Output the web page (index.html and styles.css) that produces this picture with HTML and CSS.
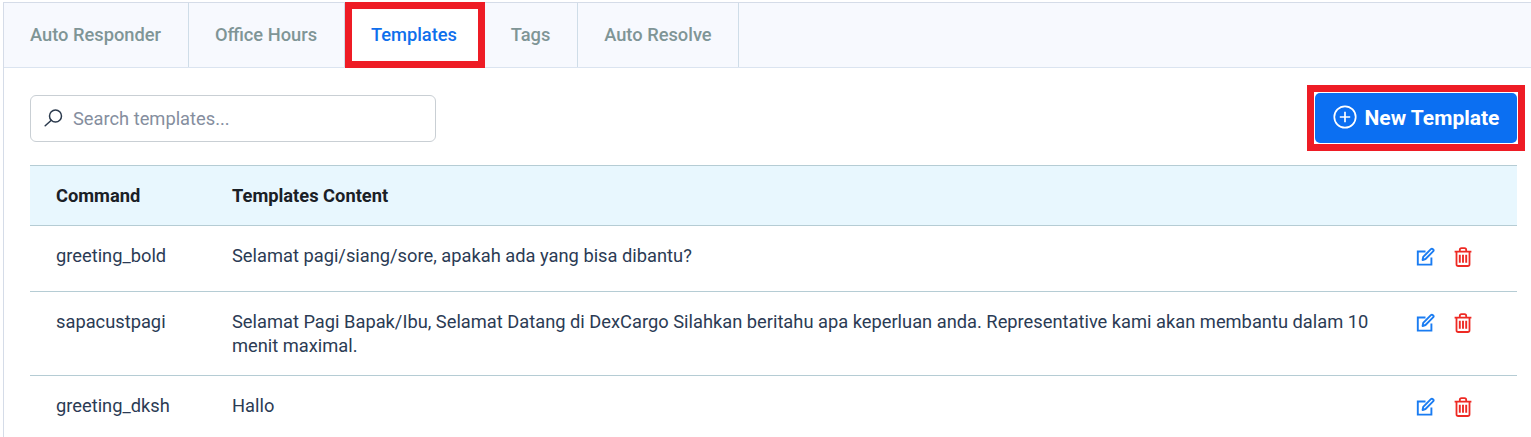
FILE: index.html
```html
<!DOCTYPE html>
<html lang="en">

<head>
    <meta charset="UTF-8">
    <meta name="viewport" content="width=device-width, initial-scale=1.0">
    <title>Templates</title>
    <link rel="stylesheet" href="styles.css">
</head>

<body>
    <!-- row icons -->
    <svg class="icon-defs" width="0" height="0">
        <symbol id="icon-edit" viewBox="0 0 20 20">
            <path d="M10.500 4.500H2.800V17.600H16.400V10.500" fill="none" stroke="#1a7cf2" stroke-width="1.900"></path>
            <path d="M7.600 13l.6-3.100L15.900 2.200c.6-.6 1.400-.6 1.900-.1l.4.4c.5.5.5 1.300-.1 1.900l-7.600 7.600z" fill="none" stroke="#1a7cf2" stroke-width="1.900" stroke-linejoin="round"></path>
        </symbol>
        <symbol id="icon-trash" viewBox="0 0 18 20">
            <path d="M.6 4.600h16.800M5.800 4.400V3c0-1 .7-1.800 1.700-1.800h3c1 0 1.700.8 1.700 1.800v1.400M2.500 4.800v12.400c0 1 .8 1.800 1.800 1.800h9.400c1 0 1.800-.8 1.800-1.800V4.800" fill="none" stroke="#ee2a24" stroke-width="1.800"></path>
            <path d="M5.800 7.800v8M9 7.800v8M12.200 7.800v8" fill="none" stroke="#ee2a24" stroke-width="1.900"></path>
        </symbol>
    </svg>

    <div class="panel">
        <div class="tabs">
            <a class="tab">Auto Responder</a>
            <a class="tab">Office Hours</a>
            <a class="tab active">Templates<span class="mark mark-tab"></span></a>
            <a class="tab">Tags</a>
            <a class="tab">Auto Resolve</a>
        </div>

        <div class="content">
            <div class="toolbar">
                <div class="search">
                    <svg class="search-icon" width="20" height="20" viewBox="0 0 20 20" fill="none" stroke="#2b3a4d" stroke-width="1.500">
                        <circle cx="11.500" cy="7" r="6"></circle>
                        <path d="M7.300 11.200 1.200 16.800" stroke-linecap="round"></path>
                    </svg>
                    <span class="search-text">Search templates...</span>
                </div>
                <button class="new-button">
                    <svg class="plus-icon" width="24" height="24" viewBox="0 0 24 24" fill="none" stroke="#fff" stroke-width="1.700">
                        <circle cx="12" cy="12" r="10.700"></circle>
                        <path d="M12 6.800v10.400M6.800 12h10.400"></path>
                    </svg>
                    New Template
                    <span class="mark mark-button"></span>
                </button>
            </div>

            <table class="templates">
                <thead>
                    <tr>
                        <th class="col-command">Command</th>
                        <th>Templates Content</th>
                        <th class="col-actions"></th>
                    </tr>
                </thead>
                <tbody>
                    <tr>
                        <td>greeting_bold</td>
                        <td>Selamat pagi/siang/sore, apakah ada yang bisa dibantu?</td>
                        <td class="actions">
                            <svg class="icon" width="20" height="20"><use href="#icon-edit"></use></svg>
                            <svg class="icon" width="18" height="20"><use href="#icon-trash"></use></svg>
                        </td>
                    </tr>
                    <tr>
                        <td>sapacustpagi</td>
                        <td>Selamat Pagi Bapak/Ibu, Selamat Datang di DexCargo Silahkan beritahu apa keperluan anda. Representative kami akan membantu dalam 10 menit maximal.</td>
                        <td class="actions">
                            <svg class="icon" width="20" height="20"><use href="#icon-edit"></use></svg>
                            <svg class="icon" width="18" height="20"><use href="#icon-trash"></use></svg>
                        </td>
                    </tr>
                    <tr>
                        <td>greeting_dksh</td>
                        <td>Hallo</td>
                        <td class="actions">
                            <svg class="icon" width="20" height="20"><use href="#icon-edit"></use></svg>
                            <svg class="icon" width="18" height="20"><use href="#icon-trash"></use></svg>
                        </td>
                    </tr>
                </tbody>
            </table>
        </div>
    </div>
</body>

</html>
```

FILE: styles.css
```css
html,
body {
    height: 100%;
}

body {
    font-family: Roboto, "Liberation Sans", sans-serif;
    background-color: #fff;
    margin: 0;
    padding: 2px 0 0 3px;
    box-sizing: border-box;
    overflow: hidden;
}

.icon-defs {
    display: block;
    height: 0;
}

.panel {
    border-top: 1px solid #d5dce8;
    border-left: 1px solid #d5dce8;
    height: 100%;
}

.tabs {
    display: flex;
    height: 65px;
    background-color: #f7f9fe;
    border-bottom: 1px solid #dbe4f0;
    box-sizing: border-box;
}

.tab {
    position: relative;
    display: flex;
    align-items: center;
    padding: 0 26.8px 2px 26px;
    font-size: 18.3px;
    font-weight: 500;
    color: #7f9596;
    border-right: 1px solid #cfdde8;
}

.tab.active {
    color: #0f6fec;
    background-color: #fff;
}

/* red annotation boxes */
.mark {
    position: absolute;
    border: 7px solid #ee1c25;
    pointer-events: none;
}

.mark-tab {
    top: -1px;
    left: 0;
    right: -1px;
    bottom: -1px;
}

.mark-button {
    top: -8px;
    left: -8px;
    right: -8px;
    bottom: -8px;
}

.content {
    padding: 27px 14px 0 26px;
}

.toolbar {
    display: flex;
    justify-content: space-between;
    align-items: flex-start;
    margin-bottom: 23px;
}

.search {
    display: flex;
    align-items: center;
    gap: 9px;
    width: 406px;
    height: 47px;
    padding-left: 13px;
    box-sizing: border-box;
    border: 1px solid #c9cfd4;
    border-radius: 6px;
    background-color: #fff;
}

.search-text {
    font-size: 18.3px;
    color: #858e9e;
}

.new-button {
    position: relative;
    display: flex;
    align-items: center;
    justify-content: center;
    gap: 8px;
    width: 202px;
    height: 50px;
    margin-top: -2px;
    margin-bottom: -2px;
    padding: 0;
    font-family: inherit;
    font-size: 21px;
    font-weight: 700;
    color: #fff;
    background-color: #0b6ff2;
    border: none;
    border-radius: 5px;
}

.plus-icon {
    margin-top: -2px;
}

.templates {
    width: 100%;
    border-collapse: collapse;
    table-layout: fixed;
    font-size: 18.3px;
}

.templates th {
    height: 59px;
    padding: 0 26px 0 0;
    text-align: left;
    font-weight: 700;
    color: #1a2026;
    background-color: #e8f7fe;
    border-top: 1px solid #b5ccd4;
    border-bottom: 1px solid #b5ccd4;
}

.templates th:first-child,
.templates td:first-child {
    padding-left: 26px;
}

.col-command {
    width: 202px;
    box-sizing: border-box;
}

.col-actions {
    width: 102px;
    box-sizing: border-box;
}

.templates td {
    height: 66px;
    box-sizing: border-box;
    padding: 18px 26px 17px 0;
    vertical-align: top;
    line-height: 24px;
    color: #2b3b54;
    border-bottom: 1px solid #b5ccd4;
}

.templates td.actions {
    padding: 21px 0 0 0;
    white-space: nowrap;
}

.icon {
    vertical-align: top;
}

.icon + .icon {
    margin-left: 14px;
}
```
